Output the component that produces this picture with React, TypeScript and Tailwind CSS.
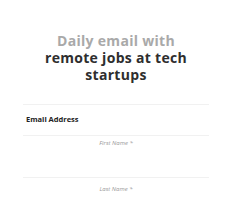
import React from 'react';

const App: React.FC = () => {
  return (
    <div className="w-[232px] h-[220px] bg-white overflow-hidden" style={{ fontFamily: '"Open Sans", "Liberation Sans", sans-serif' }}>
      <h1 className="pt-[32px] text-center font-bold text-[14px] leading-[17px] tracking-[0.3px] text-[#2e2e2e]">
        <span className="text-[#a9a9a9]">Daily email with</span>
        <br />
        remote jobs at tech
        <br />
        startups
      </h1>

      <div className="mx-[23px] mt-[21px] border-t border-[#f1f1f1]">
        <div className="h-[30px] flex items-center pl-[3px] text-[7.5px] font-bold text-[#222]">Email Address</div>
        <div className="border-t border-[#f1f1f1] h-[42px] flex flex-col items-center pt-[3px]">
          <span className="text-[6px] italic text-[#9a9a9a]">First Name *</span>
        </div>
        <div className="border-t border-[#f1f1f1] h-[42px] flex flex-col items-center pt-[7px]">
          <span className="text-[6px] italic text-[#9a9a9a]">Last Name *</span>
        </div>
      </div>
    </div>
  );
};

export default App;
